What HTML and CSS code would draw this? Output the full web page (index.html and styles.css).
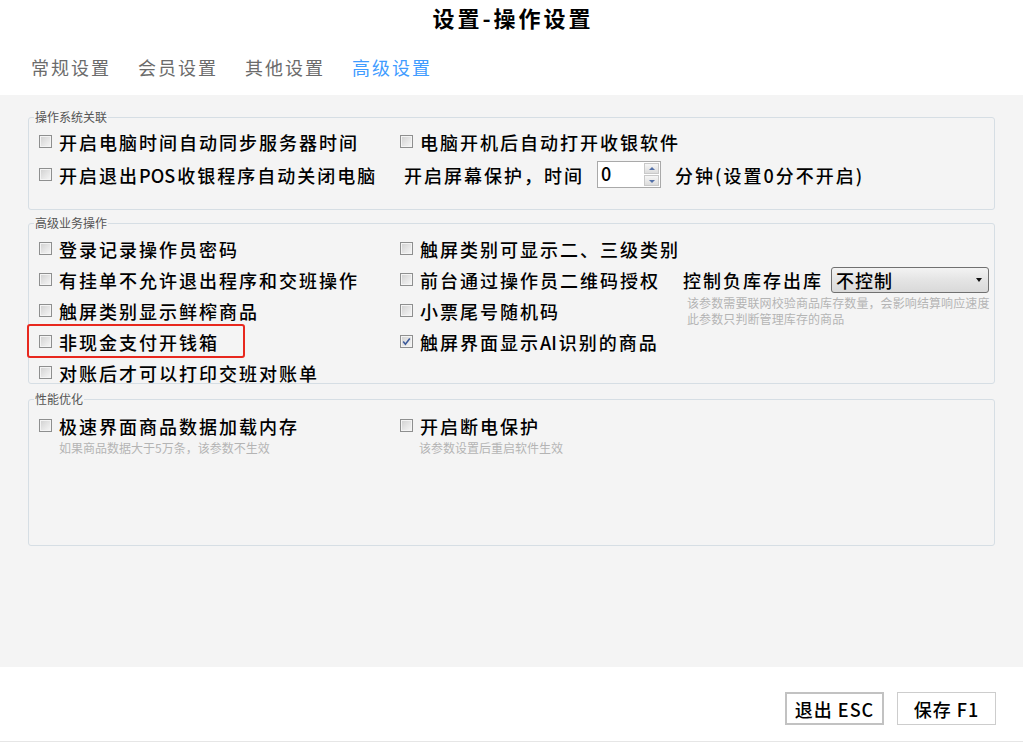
FILE: index.html
```html
<!DOCTYPE html>
<html lang="zh-CN">
<head>
<meta charset="utf-8">
<title>设置-操作设置</title>
<link rel="stylesheet" href="styles.css">
</head>
<body>
<div class="app">
  <header class="title">设置-操作设置</header>
  <nav class="tabs">
    <span class="tab">常规设置</span>
    <span class="tab">会员设置</span>
    <span class="tab">其他设置</span>
    <span class="tab active">高级设置</span>
  </nav>
  <main class="panel">
    <fieldset class="group g1">
      <legend>操作系统关联</legend>
      <div class="grid grid2 rows33">
        <div class="item"><span class="cb"></span><span class="txt">开启电脑时间自动同步服务器时间</span></div>
        <div class="item"><span class="cb"></span><span class="txt">电脑开机后自动打开收银软件</span></div>
        <div class="item"><span class="cb"></span><span class="txt">开启退出<span class="lat">POS</span>收银程序自动关闭电脑</span></div>
        <div class="item screen">
          <span class="txt">开启屏幕保护，时间</span>
          <span class="spin"><span class="spin-val">0</span><span class="spin-btns"><span class="sb up"></span><span class="sb down"></span></span></span>
          <span class="txt unit">分钟(设置0分不开启)</span>
        </div>
      </div>
    </fieldset>

    <fieldset class="group g2">
      <legend>高级业务操作</legend>
      <div class="grid grid3">
        <div class="item"><span class="cb"></span><span class="txt">登录记录操作员密码</span></div>
        <div class="item"><span class="cb"></span><span class="txt">触屏类别可显示二、三级类别</span></div>
        <div class="cell"></div>

        <div class="item"><span class="cb"></span><span class="txt">有挂单不允许退出程序和交班操作</span></div>
        <div class="item"><span class="cb"></span><span class="txt">前台通过操作员二维码授权</span></div>
        <div class="item ctrl">
          <span class="txt">控制负库存出库</span>
          <span class="select"><span class="select-val">不控制</span><span class="caret"></span></span>
        </div>

        <div class="item"><span class="cb"></span><span class="txt">触屏类别显示鲜榨商品</span></div>
        <div class="item"><span class="cb"></span><span class="txt">小票尾号随机码</span></div>
        <div class="cell hints">
          <div class="hint">该参数需要联网校验商品库存数量，会影响结算响应速度</div>
          <div class="hint">此参数只判断管理库存的商品</div>
        </div>

        <div class="item marked"><span class="cb"></span><span class="txt">非现金支付开钱箱</span><span class="redbox"></span></div>
        <div class="item"><span class="cb checked"><svg viewBox="0 0 13 13" width="13" height="13"><path d="M3.2 6.6 L5.4 9.2 L9.8 3.6" fill="none" stroke="#3c5a9a" stroke-width="1.6"/></svg></span><span class="txt">触屏界面显示<span class="lat">AI</span>识别的商品</span></div>
        <div class="cell"></div>

        <div class="item"><span class="cb"></span><span class="txt">对账后才可以打印交班对账单</span></div>
        <div class="cell"></div>
        <div class="cell"></div>
      </div>
    </fieldset>

    <fieldset class="group g3">
      <legend>性能优化</legend>
      <div class="grid grid2">
        <div class="opt">
          <div class="item"><span class="cb"></span><span class="txt">极速界面商品数据加载内存</span></div>
          <div class="hint sub">如果商品数据大于5万条，该参数不生效</div>
        </div>
        <div class="opt">
          <div class="item"><span class="cb"></span><span class="txt">开启断电保护</span></div>
          <div class="hint sub">该参数设置后重启软件生效</div>
        </div>
      </div>
    </fieldset>
  </main>
  <footer class="footer">
    <button class="btn focus">退出 ESC</button>
    <button class="btn">保存 F1</button>
  </footer>
</div>
</body>
</html>
```
FILE: styles.css
```css
* { box-sizing: border-box; }
html, body { margin: 0; padding: 0; background: #fff; }
body {
  font-family: "Noto Sans CJK SC", "Liberation Sans", sans-serif;
  color: #000;
  width: 1023px;
  height: 742px;
  overflow: hidden;
}
.app { width: 1023px; height: 742px; display: flex; flex-direction: column; }

.title {
  height: 34px;
  line-height: 34px;
  text-align: center;
  font-size: 22px;
  font-weight: bold;
  letter-spacing: 3px;
  padding-left: 3px;
}

.tabs {
  height: 61px;
  padding: 18px 0 0 31px;
  display: flex;
  gap: 27px;
}
.tab {
  font-size: 18px;
  line-height: 30px;
  letter-spacing: 2px;
  color: #6b6b6b;
}
.tab.active { color: #3f9cff; }

.panel {
  height: 572px;
  background: #f4f4f4;
  padding: 15px 28px 0 28px;
}

.group {
  margin: 0;
  border: 1px solid #d6dee4;
  border-radius: 3px;
  padding: 0 10px;
  min-width: 0;
}
.group legend {
  font-size: 12px;
  line-height: 14px;
  color: #555;
  padding: 0 1px;
  margin-left: -5px;
}
.g1 { padding-top: 1px; padding-bottom: 18px; }
.g2 { margin-top: 6px; padding-top: 3px; padding-bottom: 0; }
.g3 { margin-top: 8px; padding-top: 4px; padding-bottom: 90px; }

.grid { display: grid; }
.grid2 { grid-template-columns: 361px 1fr; }
.rows33 { grid-auto-rows: 33px; }
.grid3 {
  grid-template-columns: 361px 283px 1fr;
  grid-template-rows: 31px 31px 31px 31px 26px;
}
.grid3 > .item { height: 31px; }

.item {
  display: flex;
  align-items: center;
  height: 100%;
  position: relative;
}
.opt .item { height: 31px; }
.txt {
  font-size: 18px;
  line-height: 24px;
  letter-spacing: 2px;
  font-weight: 500;
  white-space: nowrap;
}
.lat { letter-spacing: 0; margin-right: 2px; }

.cb {
  width: 13px;
  height: 13px;
  flex: none;
  margin-right: 7px;
  border: 1px solid #8e8f8f;
  background: linear-gradient(135deg, #cfcfcf 0%, #e6e6e6 55%, #f7f7f7 100%);
  box-shadow: inset 0 0 0 1px #f4f4f4;
  position: relative;
}
.cb svg { position: absolute; left: -1px; top: -1px; }

.screen { padding-left: 4px; }
.spin {
  margin-left: 13px;
  width: 64px;
  height: 27px;
  background: #fff;
  border: 1px solid #a9a9a9;
  display: flex;
  justify-content: space-between;
  flex: none;
}
.spin-val { font-size: 18px; line-height: 22px; padding-left: 3px; font-weight: 500; }
.spin-btns {
  width: 17px;
  padding: 1px;
  display: flex;
  flex-direction: column;
  gap: 1px;
}
.sb {
  flex: 1;
  border: 1px solid #c9c9c9;
  background: linear-gradient(#f6f6f6, #dcdcdc);
  position: relative;
}
.sb::after {
  content: "";
  position: absolute;
  left: 50%;
  top: 50%;
  margin-left: -3px;
  border-left: 3px solid transparent;
  border-right: 3px solid transparent;
}
.sb.up::after { border-bottom: 3px solid #5471a8; margin-top: -2px; }
.sb.down::after { border-top: 3px solid #5471a8; margin-top: -1px; }
.unit { margin-left: 14px; }

.select {
  margin-left: 8px;
  width: 158px;
  height: 26px;
  border: 1px solid #707070;
  border-radius: 3px;
  background: linear-gradient(#f3f3f3, #e4e4e4 50%, #d9d9d9);
  display: flex;
  align-items: center;
  justify-content: space-between;
  padding: 0 6px 0 4px;
  flex: none;
}
.select-val { font-size: 18px; line-height: 22px; letter-spacing: 1px; font-weight: 500; }
.caret {
  border-left: 3px solid transparent;
  border-right: 3px solid transparent;
  border-top: 4px solid #111;
}

.hints {
  display: flex;
  flex-direction: column;
  justify-content: center;
  padding-left: 4px;
}
.hint {
  font-size: 12px;
  line-height: 16px;
  letter-spacing: 0.1px;
  color: #b4b4b4;
  white-space: nowrap;
}
.hint.sub { line-height: 14px; padding-left: 20px; letter-spacing: 0; }
.opt:nth-child(2) .hint.sub { padding-left: 19px; }

.redbox {
  position: absolute;
  left: -12px;
  top: -2px;
  width: 218px;
  height: 34px;
  border: 2px solid #e8281e;
  border-radius: 3px;
  pointer-events: none;
}

.footer {
  height: 75px;
  background: #fff;
  border-bottom: 1px solid #e6e6e6;
  display: flex;
  justify-content: flex-end;
  align-items: flex-start;
  gap: 13px;
  padding: 25px 27px 0 0;
}
.btn {
  width: 99px;
  height: 33px;
  background: #fff;
  border: 1px solid #cdcdcd;
  font-family: "Noto Sans CJK SC", "Liberation Sans", sans-serif;
  font-size: 18px;
  line-height: 24px;
  letter-spacing: 1px;
  font-weight: 500;
  color: #000;
  padding: 0;
  margin: 0;
}
.btn.focus { border: 2px solid #c2c2c2; }
```
